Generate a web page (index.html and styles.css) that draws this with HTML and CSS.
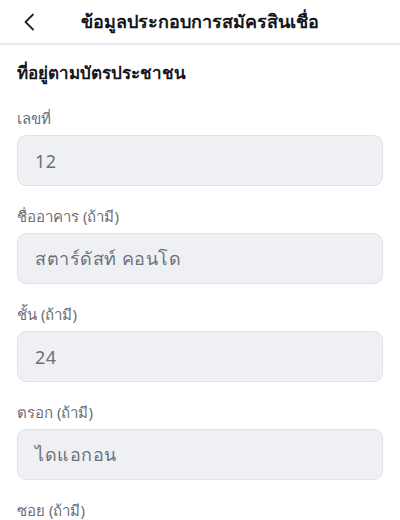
FILE: index.html
```html
<!DOCTYPE html>
<html lang="th">
<head>
<meta charset="utf-8">
<link rel="stylesheet" href="styles.css">
</head>
<body>
<header class="topbar">
  <button class="back" aria-label="back">
    <svg width="12" height="18" viewBox="0 0 12 18"><path d="M10 1.5 L2.5 9 L10 16.5" fill="none" stroke="#222" stroke-width="1.8" stroke-linecap="round" stroke-linejoin="round"/></svg>
  </button>
  <h1 class="title">ข้อมูลประกอบการสมัครสินเชื่อ</h1>
</header>
<main class="content">
  <h2 class="section">ที่อยู่ตามบัตรประชาชน</h2>
  <div class="field">
    <label class="label">เลขที่</label>
    <div class="input">12</div>
  </div>
  <div class="field">
    <label class="label">ชื่ออาคาร (ถ้ามี)</label>
    <div class="input">สตาร์ดัสท์ คอนโด</div>
  </div>
  <div class="field">
    <label class="label">ชั้น (ถ้ามี)</label>
    <div class="input">24</div>
  </div>
  <div class="field">
    <label class="label">ตรอก (ถ้ามี)</label>
    <div class="input">ไดแอกอน</div>
  </div>
  <div class="field">
    <label class="label">ซอย (ถ้ามี)</label>
  </div>
</main>
</body>
</html>
```
FILE: styles.css
```css
* { box-sizing: border-box; }
html, body { margin: 0; padding: 0; background: #fff; }
body {
  font-family: "Noto Sans", Roboto, sans-serif;
  color: #1a1c22;
  width: 400px;
  height: 520px;
  overflow: hidden;
}
.topbar {
  position: relative;
  height: 45px;
  border-bottom: 2px solid #e6e8ec;
  display: flex;
  align-items: center;
  justify-content: center;
}
.back {
  position: absolute;
  left: 21px;
  top: 12px;
  padding: 0;
  border: 0;
  background: none;
  width: 16px;
  height: 20px;
  display: flex;
  align-items: center;
  justify-content: center;
}
.title {
  margin: 0;
  font-size: 18px;
  font-weight: 700;
  color: #14161c;
}
.content {
  padding: 14px 17px 0;
}
.section {
  margin: 0 0 18px;
  font-size: 17px;
  font-weight: 700;
  color: #14161c;
  line-height: 28px;
}
.field {
  display: flex;
  flex-direction: column;
  margin-bottom: 17px;
}
.label {
  font-size: 15px;
  color: #6b6e77;
  line-height: 26px;
  margin-bottom: 4px;
}
.input {
  height: 51px;
  background: #eff0f4;
  border: 1px solid #e0e2e8;
  border-radius: 9px;
  padding: 0 17px;
  display: flex;
  align-items: center;
  font-size: 18px;
  color: #6d707a;
  letter-spacing: 0.5px;
}
```
